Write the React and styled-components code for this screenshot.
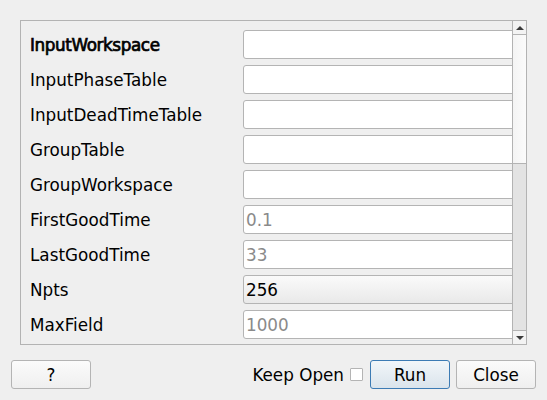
import React from 'react';
import styled, { createGlobalStyle } from 'styled-components';

const Global = createGlobalStyle`
  html, body {
    margin: 0;
    padding: 0;
    background: #efefef;
  }
  body {
    font-family: "DejaVu Sans", "Liberation Sans", sans-serif;
    font-size: 16.8px;
    color: #000;
  }
`;

const Dialog = styled.div`
  width: 547px;
  height: 400px;
  box-sizing: border-box;
  padding: 20px 11px 0 11px;
  display: flex;
  flex-direction: column;
  gap: 15px;
  background: #efefef;
`;

const Frame = styled.div`
  margin: 0 9px;
  height: 325px;
  box-sizing: border-box;
  border: 1px solid #b3b3b3;
  display: flex;
`;

const Viewport = styled.div`
  flex: 1;
  overflow: hidden;
  padding: 9px 0 0 9px;
`;

const Grid = styled.div`
  display: grid;
  grid-template-columns: 213px 300px;
  grid-auto-rows: 29px;
  row-gap: 6px;
`;

/* the mandatory property is drawn with an emboldened regular face */
const Label = styled.div`
  display: flex;
  align-items: center;
  white-space: nowrap;
  ${p => p.$bold && `
    -webkit-text-stroke: 0.7px #000;
    letter-spacing: -0.4px;
  `}
`;

const Field = styled.div`
  box-sizing: border-box;
  height: 29px;
  border: 1px solid #b4b4b4;
  border-radius: 3px;
  background: ${p => (p.$combo ? 'linear-gradient(#fafafa, #e9e9e9)' : '#fff')};
  color: ${p => (p.$hint ? '#8a8a8a' : '#000')};
  display: flex;
  align-items: center;
  padding-left: 2px;
`;

const ScrollBar = styled.div`
  width: 14px;
  box-sizing: border-box;
  border-left: 1px solid #b3b3b3;
  display: flex;
  flex-direction: column;
`;

const Arrow = styled.div`
  height: 13px;
  flex: none;
  background: #f3f3f3;
  display: flex;
  align-items: center;
  justify-content: center;
  border-bottom: ${p => (p.$up ? '1px solid #b3b3b3' : 'none')};
  border-top: ${p => (p.$up ? 'none' : '1px solid #b3b3b3')};
  &::after {
    content: '';
    width: 0;
    height: 0;
    border-left: 4px solid transparent;
    border-right: 4px solid transparent;
    ${p => (p.$up ? 'border-bottom: 4px solid #3a3a3a;' : 'border-top: 4px solid #3a3a3a;')}
  }
`;

const Track = styled.div`
  height: 128px;
  flex: none;
  background: linear-gradient(90deg, #f4f4f4, #fbfbfb);
`;

const Handle = styled.div`
  flex: 1;
  background: #e3e3e3;
  border-top: 1px solid #b3b3b3;
`;

const ButtonRow = styled.div`
  display: flex;
  align-items: center;
  height: 29px;
`;

const Button = styled.button`
  width: 80px;
  height: 29px;
  box-sizing: border-box;
  font-family: inherit;
  font-size: 16.8px;
  color: #000;
  padding: 0;
  border-radius: 3px;
  border: 1px solid ${p => (p.$primary ? '#3c7bb4' : '#b4b4b4')};
  background: ${p =>
    p.$primary
      ? 'linear-gradient(#f2f6f9, #dae4ec)'
      : 'linear-gradient(#fbfbfb, #efefef)'};
`;

const Spacer = styled.div`
  flex: 1;
`;

const KeepOpen = styled.label`
  display: flex;
  align-items: center;
  gap: 6px;
  margin-right: 7px;
`;

const Check = styled.span`
  width: 13px;
  height: 13px;
  box-sizing: border-box;
  border: 1px solid #b4b4b4;
  background: #fff;
  border-radius: 1px;
`;

const rows = [
  { label: 'InputWorkspace', bold: true },
  { label: 'InputPhaseTable' },
  { label: 'InputDeadTimeTable' },
  { label: 'GroupTable' },
  { label: 'GroupWorkspace' },
  { label: 'FirstGoodTime', value: '0.1', hint: true },
  { label: 'LastGoodTime', value: '33', hint: true },
  { label: 'Npts', value: '256', combo: true },
  { label: 'MaxField', value: '1000', hint: true },
];

export default function App() {
  return (
    <>
      <Global />
      <Dialog>
        <Frame>
          <Viewport>
            <Grid>
              {rows.map(r => (
                <React.Fragment key={r.label}>
                  <Label $bold={r.bold}>{r.label}</Label>
                  <Field $hint={r.hint} $combo={r.combo}>{r.value}</Field>
                </React.Fragment>
              ))}
            </Grid>
          </Viewport>
          <ScrollBar>
            <Arrow $up />
            <Track />
            <Handle />
            <Arrow />
          </ScrollBar>
        </Frame>
        <ButtonRow>
          <Button>?</Button>
          <Spacer />
          <KeepOpen>
            Keep Open
            <Check />
          </KeepOpen>
          <Button $primary>Run</Button>
          <Button style={{ marginLeft: 6 }}>Close</Button>
        </ButtonRow>
      </Dialog>
    </>
  );
}
